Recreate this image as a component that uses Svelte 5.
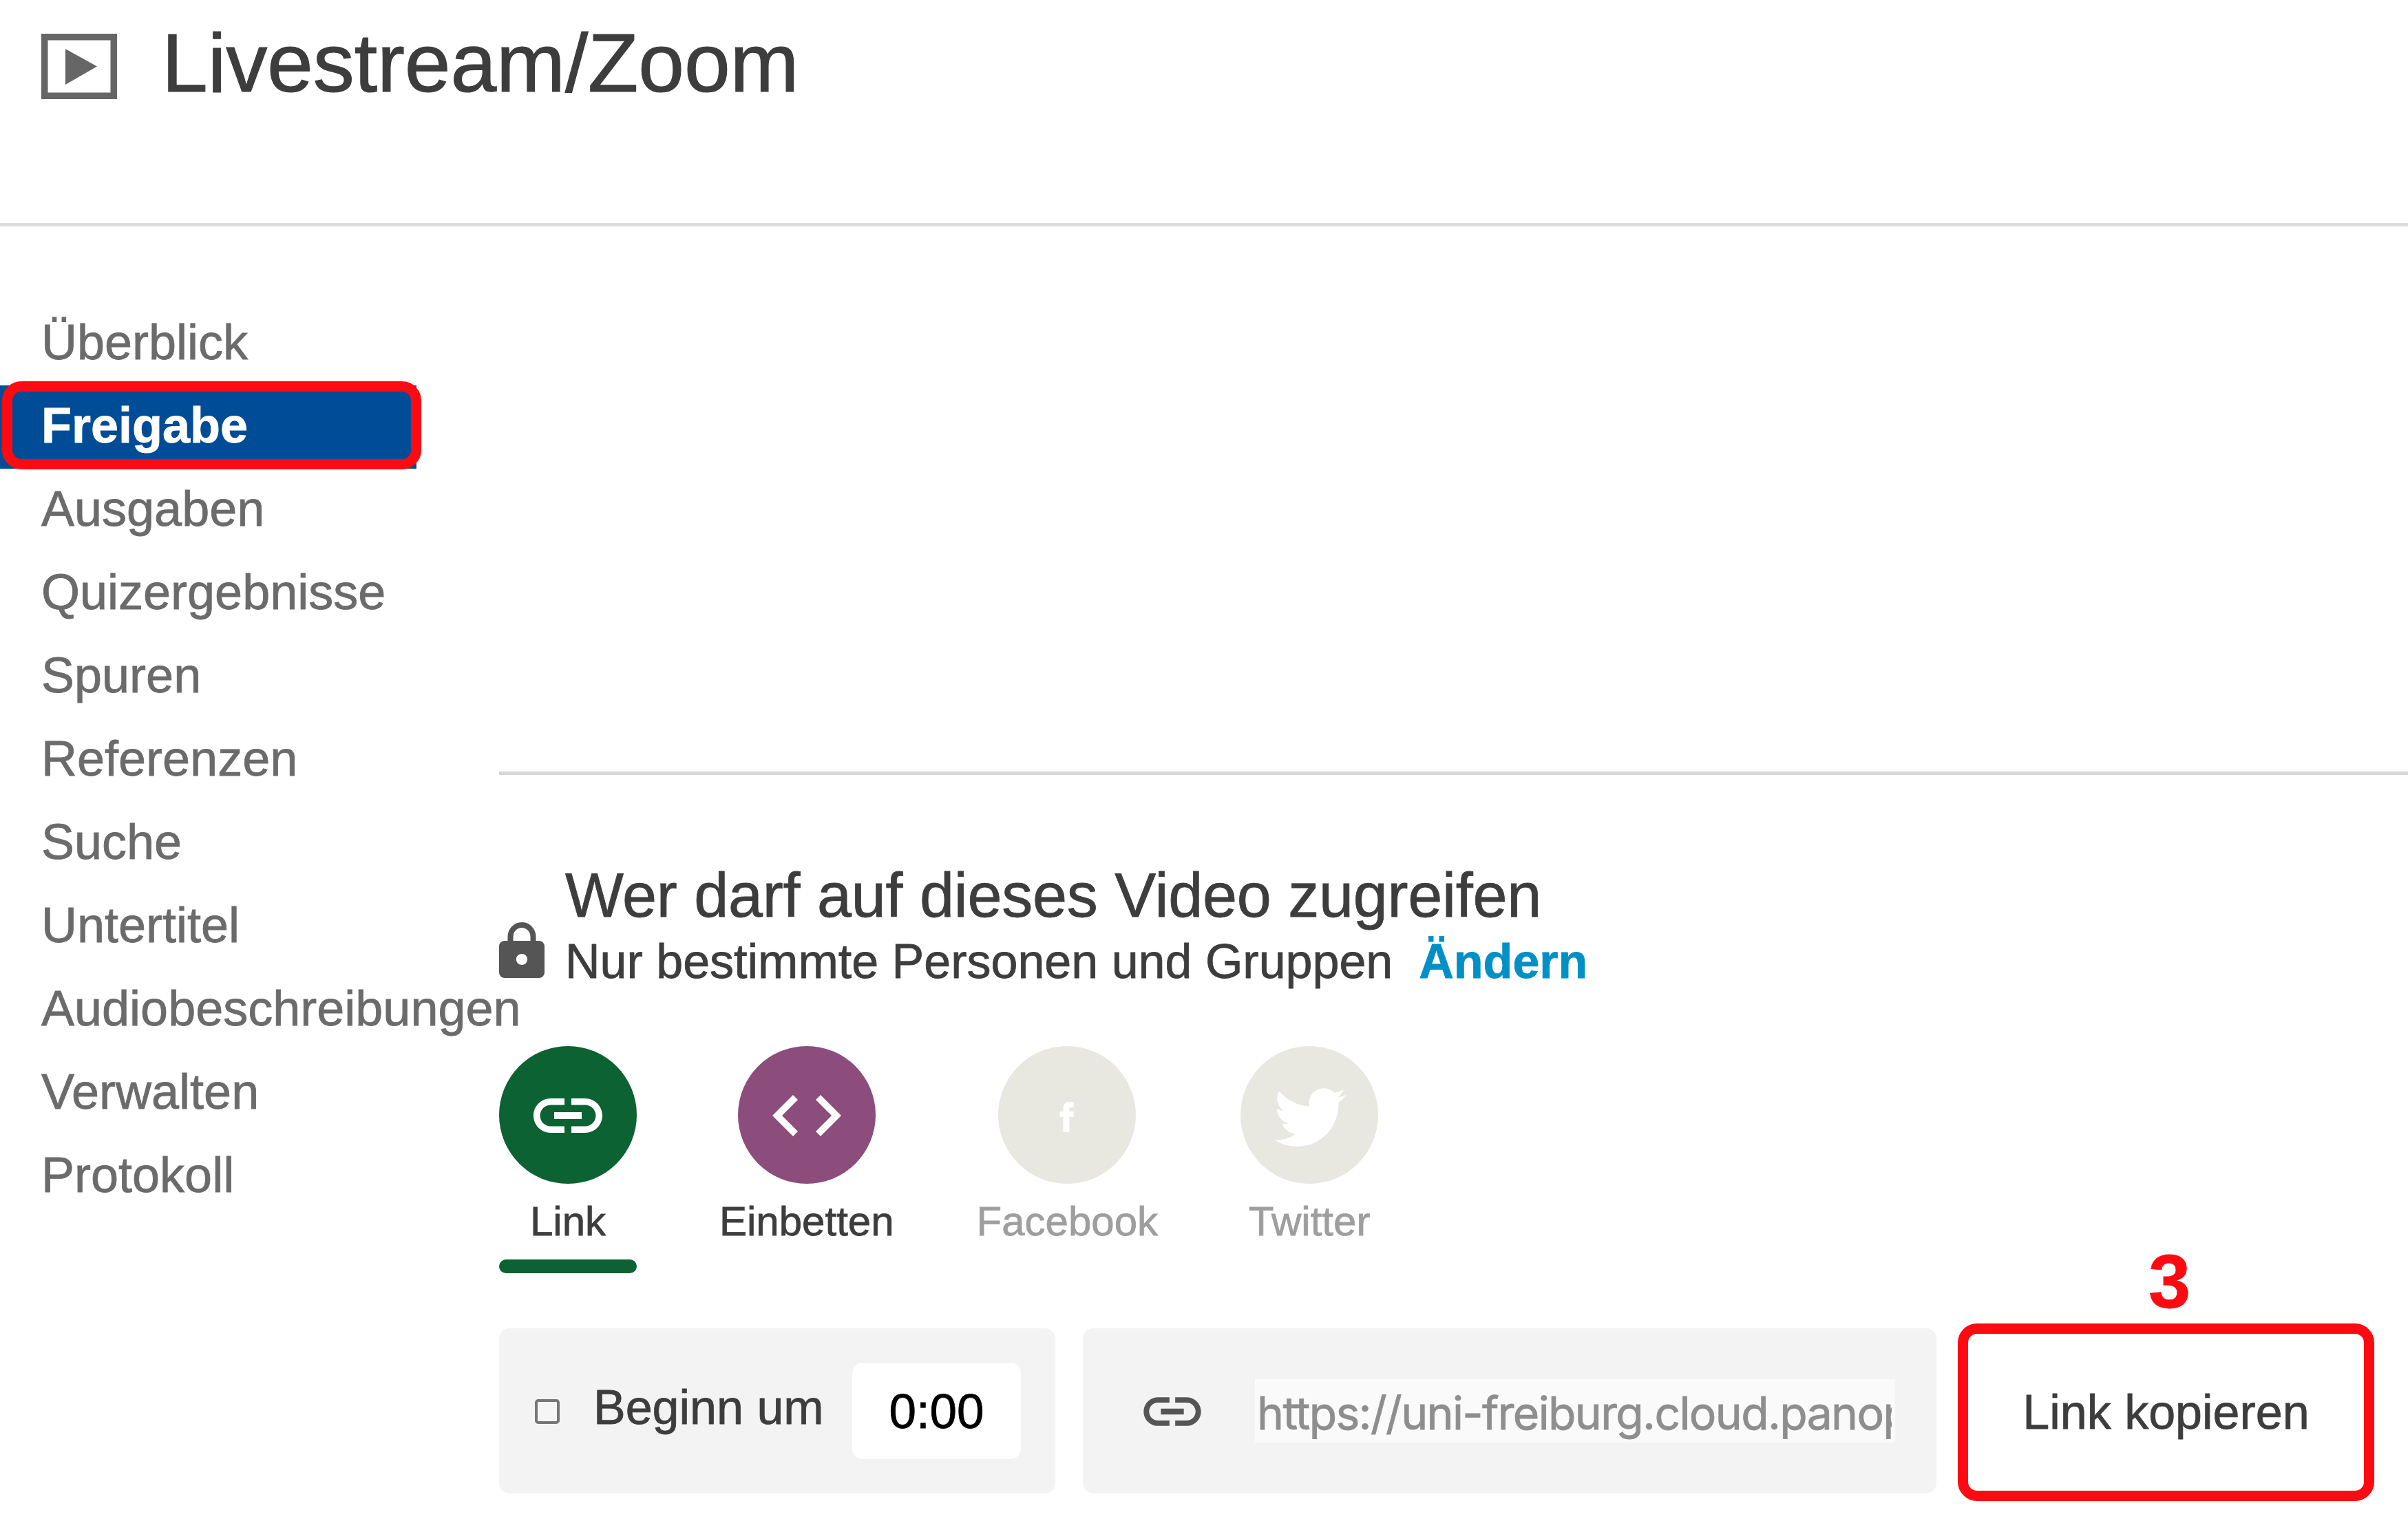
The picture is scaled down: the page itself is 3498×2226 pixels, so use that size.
<script lang="ts">
  const title = 'Livestream/Zoom';

  const navItems = [
    'Überblick',
    'Freigabe',
    'Ausgaben',
    'Quizergebnisse',
    'Spuren',
    'Referenzen',
    'Suche',
    'Untertitel',
    'Audiobeschreibungen',
    'Verwalten',
    'Protokoll',
  ];

  const LINK_ICON =
    'M3.9 12c0-1.71 1.39-3.1 3.1-3.1h4V7H7c-2.76 0-5 2.24-5 5s2.24 5 5 5h4v-1.9H7c-1.71 0-3.1-1.39-3.1-3.1zM8 13h8v-2H8v2zm9-6h-4v1.9h4c1.71 0 3.1 1.39 3.1 3.1s-1.39 3.1-3.1 3.1h-4V17h4c2.76 0 5-2.24 5-5s-2.24-5-5-5z';

  const shareTabs = [
    { id: 'link', label: 'Link', disabled: false },
    { id: 'embed', label: 'Einbetten', disabled: false },
    { id: 'facebook', label: 'Facebook', disabled: true },
    { id: 'twitter', label: 'Twitter', disabled: true },
  ];

  let activeNav = $state('Freigabe');
  let activeTab = $state('link');
  let startAt = $state(false);
  let startTime = $state('0:00');
  const url = 'https://uni-freiburg.cloud.panop';
</script>

<div class="page">
  <header>
    <svg class="play" viewBox="0 0 110 95">
      <rect x="4.75" y="4.75" width="100.5" height="85.5" fill="#fff" stroke="#666" stroke-width="9.5" />
      <path d="M35 22 L81 47.500 L35 74z" fill="#666" />
    </svg>
    <h1>{title}</h1>
  </header>

  <div class="body">
    <nav>
      {#each navItems as item}
        <button class="nav-item" class:active={item === activeNav} onclick={() => (activeNav = item)}>
          {item}
          {#if item === activeNav}<span class="nav-mark"></span>{/if}
        </button>
      {/each}
    </nav>

    <main>
      <div class="preview"></div>

      <section class="share">
        <div class="access">
          <svg class="lock" viewBox="0 0 66 81">
            <path d="M16.500 30V21a16.500 17 0 0 1 33 0v9" fill="none" stroke="#555" stroke-width="8" />
            <path fill="#555" fill-rule="evenodd" d="M8 27h50a8 8 0 0 1 8 8v38a8 8 0 0 1-8 8H8a8 8 0 0 1-8-8V35a8 8 0 0 1 8-8zM33 46a8.200 8 0 1 0 0 16a8.200 8 0 1 0 0-16z" />
          </svg>
          <div>
            <h2>Wer darf auf dieses Video zugreifen</h2>
            <p><span class="who">Nur bestimmte Personen und Gruppen</span><b class="change">Ändern</b></p>
          </div>
        </div>

        <div class="tabs">
          {#each shareTabs as { id, label, disabled }}
            <button class="tab {id}" class:selected={id === activeTab} {disabled} onclick={() => (activeTab = id)}>
              <span class="circle">
                {#if id === 'link'}
                  <svg class="icon" viewBox="0 0 24 24"><path d={LINK_ICON} /></svg>
                {:else if id === 'embed'}
                  <svg class="icon" viewBox="0 0 24 24"><path d="M9.400 16.600L4.800 12l4.600-4.600L8 6l-6 6 6 6 1.400-1.400zm5.200 0l4.600-4.600-4.600-4.600L16 6l6 6-6 6-1.400-1.400z" /></svg>
                {:else if id === 'facebook'}
                  <svg class="fb" viewBox="0 0 21 44"><path d="M5.500 44V22H0.500V14H5.500V10C5.500 3 9 0 14.500 0H21V8H16.500C15 8 14.500 8.700 14.500 10.200V14H21L20.300 22H14.500V44z" /></svg>
                {:else}
                  <svg class="bird" viewBox="0 2.250 24 19.500"><path d="M23.953 4.570a10 10 0 0 1-2.825.775 4.958 4.958 0 0 0 2.163-2.723c-.951.555-2.005.959-3.127 1.184a4.920 4.920 0 0 0-8.384 4.482C7.690 8.095 4.067 6.130 1.640 3.162a4.822 4.822 0 0 0-.666 2.475c0 1.710.870 3.213 2.188 4.096a4.904 4.904 0 0 1-2.228-.616v.060a4.923 4.923 0 0 0 3.946 4.827 4.996 4.996 0 0 1-2.212.085 4.936 4.936 0 0 0 4.604 3.417 9.867 9.867 0 0 1-6.102 2.105c-.390 0-.779-.023-1.170-.067a13.995 13.995 0 0 0 7.557 2.209c9.053 0 13.998-7.496 13.998-13.985 0-.210 0-.420-.015-.630A9.935 9.935 0 0 0 24 4.590z" /></svg>
                {/if}
              </span>
              <span class="label">{label}</span>
              <span class="bar"></span>
            </button>
          {/each}
        </div>

        <div class="row">
          <div class="panel start">
            <input class="check" type="checkbox" bind:checked={startAt} />
            <span class="begin">Beginn um</span>
            <input class="time" bind:value={startTime} />
          </div>
          <div class="panel url">
            <svg class="url-icon" viewBox="0 0 24 24"><path d={LINK_ICON} /></svg>
            <div class="url-field"><span>{url}</span></div>
          </div>
          <button class="copy">
            Link kopieren
            <span class="step">3</span>
          </button>
        </div>
      </section>
    </main>
  </div>
</div>

<style>
  :global(body) {
    background: #fff;
  }

  .page {
    width: 3498px;
    height: 2226px;
    overflow: hidden;
    font-family: 'Liberation Sans', Arial, sans-serif;
    color: #3d3d3d;
    -webkit-text-stroke: 0.8px;
  }

  h1, h2, p {
    margin: 0;
    font-weight: normal;
  }

  button {
    padding: 0;
    border: 0;
    background: none;
    font-family: inherit;
    color: inherit;
  }

  header {
    display: flex;
    align-items: flex-start;
    height: 324px;
    border-bottom: 5px solid #dcdcdc;
  }

  .play {
    width: 110px;
    height: 95px;
    margin: 49px 65px 0 60px;
  }

  h1 {
    margin-top: 21px;
    font-size: 120px;
    line-height: 140px;
    letter-spacing: -0.1px;
    white-space: nowrap;
    -webkit-text-stroke: 1.2px;
  }

  .body {
    display: flex;
  }

  nav {
    flex: none;
    width: 605px;
    margin-right: 120px;
    padding-top: 110px;
  }

  .nav-item {
    position: relative;
    display: block;
    width: 605px;
    height: 121px;
    padding: 0 0 5px 60px;
    font-size: 72px;
    line-height: 116px;
    text-align: left;
    white-space: nowrap;
    color: #6b6b6b;
  }

  .nav-item.active {
    background: #004c97;
    color: #fff;
    font-weight: bold;
  }

  .nav-mark {
    position: absolute;
    left: 3px;
    top: -6px;
    box-sizing: border-box;
    width: 609px;
    height: 128px;
    border: 15px solid #ff0a12;
    border-radius: 28px;
  }

  main {
    flex: 1;
    min-width: 0;
  }

  .preview {
    height: 792px;
    border-bottom: 5px solid #d7d7d7;
  }

  .share {
    padding-top: 125px;
  }

  .access {
    display: flex;
    align-items: flex-end;
    gap: 30px;
    white-space: nowrap;
  }

  .lock {
    width: 66px;
    height: 81px;
    margin-bottom: 21px;
  }

  h2 {
    font-size: 90px;
    line-height: 100px;
    letter-spacing: -0.27px;
  }

  p {
    display: flex;
    gap: 38px;
    height: 91px;
    font-size: 70px;
    line-height: 92px;
  }

  .change {
    color: #0090c5;
  }

  .tabs {
    display: flex;
    gap: 120px;
    margin-top: 78px;
  }

  .tab {
    display: flex;
    flex-direction: column;
    align-items: center;
    min-width: 200px;
    font-size: 60px;
  }

  .circle {
    display: flex;
    align-items: center;
    justify-content: center;
    width: 200px;
    height: 200px;
    border-radius: 50%;
    background: #e8e8e0;
    fill: #fff;
  }

  .link .circle {
    background: #0c6232;
  }

  .embed .circle {
    background: #8c4c7c;
  }

  .icon {
    width: 120px;
    height: 120px;
    margin-top: 2px;
  }

  .fb {
    width: 21px;
    height: 44px;
    margin: 6px 1px 0 0;
  }

  .bird {
    width: 104px;
    height: 85px;
    margin: 7px 0 0 2px;
  }

  .label {
    margin-top: 20px;
    line-height: 70px;
  }

  .tab:disabled {
    color: #9e9e9e;
  }

  .bar {
    width: 200px;
    height: 20px;
    margin-top: 20px;
    border-radius: 10px;
  }

  .selected .bar {
    background: #0c6232;
  }

  .row {
    display: flex;
    margin-top: 80px;
  }

  .panel {
    display: flex;
    align-items: center;
    box-sizing: border-box;
    height: 240px;
    border-radius: 15px;
    background: #f3f3f3;
  }

  .start {
    width: 808px;
    margin-right: 40px;
    padding: 0 50px 0 52px;
  }

  .check {
    appearance: none;
    box-sizing: border-box;
    width: 36px;
    height: 36px;
    margin: 2px 49px 0 0;
    border: 4px solid #767676;
    border-radius: 5px;
    background: #f5f5f5;
  }

  .begin {
    margin-top: -10px;
    font-size: 70px;
    line-height: 80px;
    white-space: nowrap;
  }

  .time {
    box-sizing: border-box;
    width: 245px;
    height: 140px;
    margin-left: auto;
    padding: 0;
    border: 0;
    border-radius: 15px;
    background: #fff;
    font: 71px 'Liberation Sans', Arial, sans-serif;
    text-align: center;
    color: #000;
  }

  .url {
    width: 1240px;
    margin-right: 31px;
    padding: 0 60px 0 80px;
  }

  .url-icon {
    width: 100px;
    height: 100px;
    margin: 2px 70px 0 0;
    fill: #555;
  }

  .url-field {
    box-sizing: border-box;
    width: 930px;
    height: 92px;
    padding: 0 5px 0 3px;
    background: #fafafa;
  }

  .url-field span {
    display: block;
    overflow: hidden;
    font-family: Inter, sans-serif;
    font-size: 66px;
    line-height: 98px;
    letter-spacing: -1.65px;
    height: 92px;
    white-space: nowrap;
    color: #8e8e8e;
  }

  .copy {
    position: relative;
    box-sizing: border-box;
    width: 605px;
    height: 258px;
    margin: -7px 0 0;
    border: 15px solid #ff0a12;
    border-radius: 28px;
    font-size: 70px;
    line-height: 228px;
    white-space: nowrap;
  }

  .step {
    position: absolute;
    left: 262px;
    top: -136px;
    font-size: 110px;
    line-height: 120px;
    font-weight: bold;
    color: #ff0a12;
  }
</style>
